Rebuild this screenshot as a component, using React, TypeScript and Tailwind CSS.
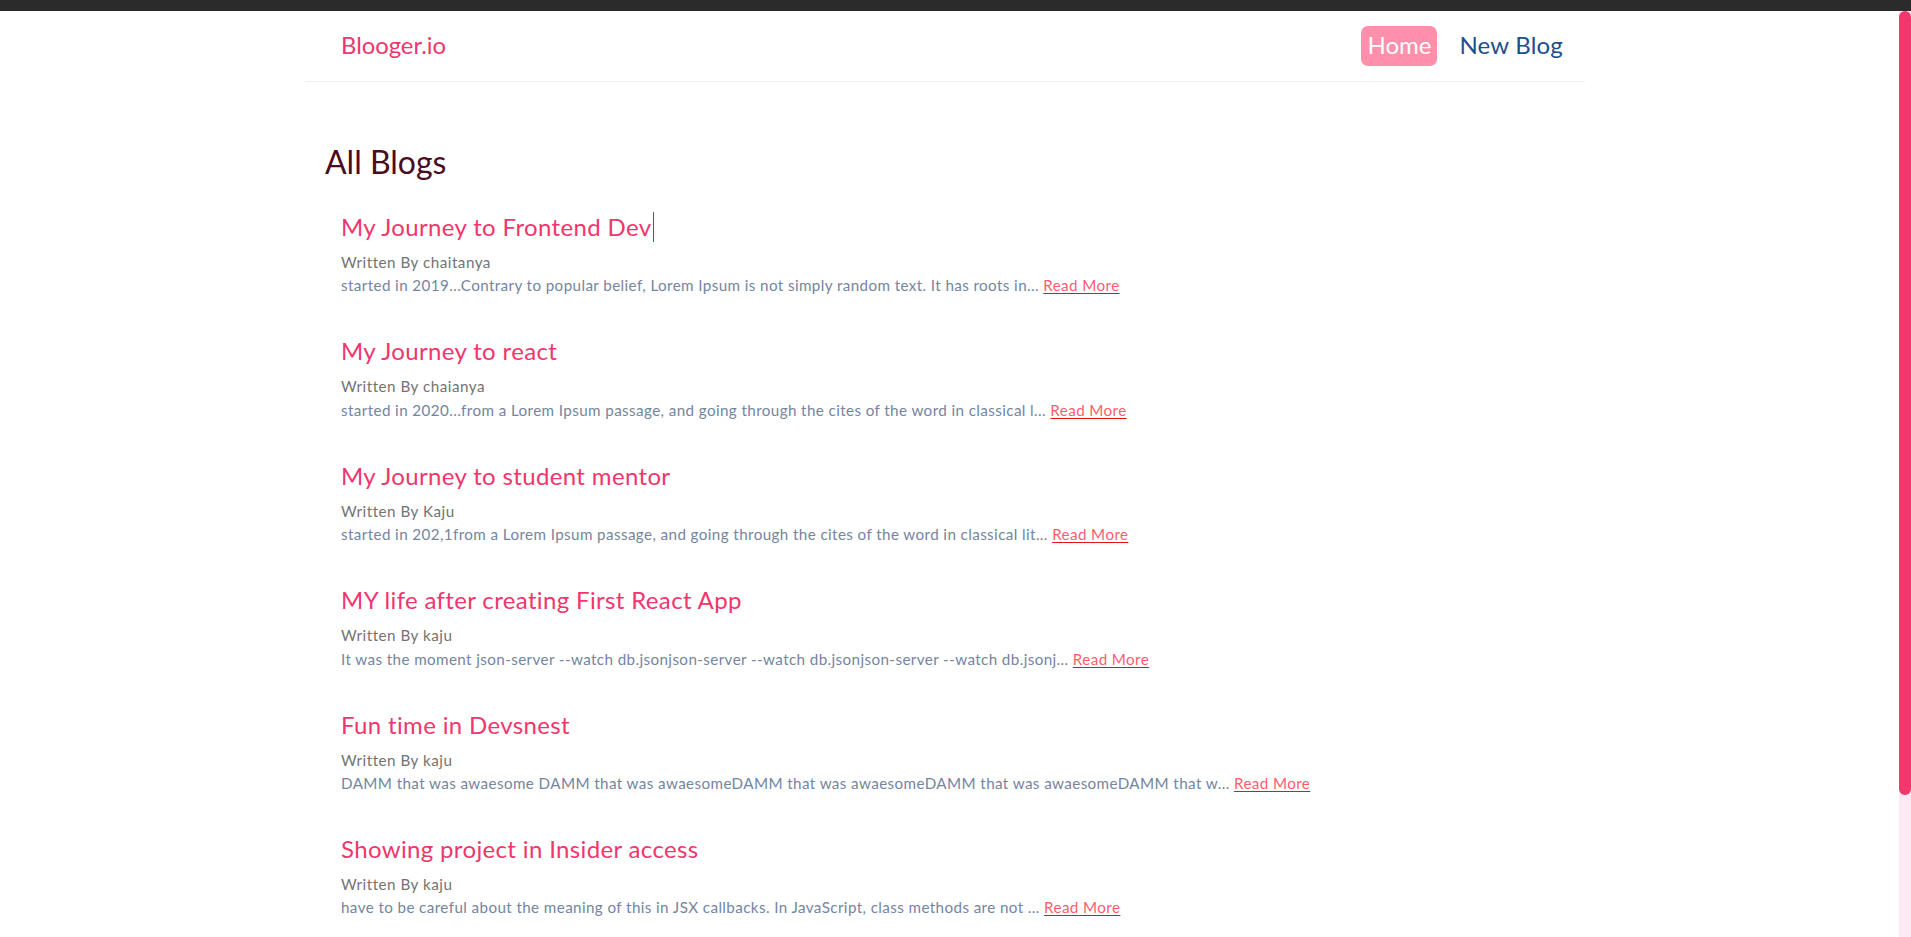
import React from "react";

type Blog = {
	id: number;
	title: string;
	author: string;
	excerpt: string;
};

const blogs: Blog[] = [
	{
		id: 1,
		title: "My Journey to Frontend Dev",
		author: "chaitanya",
		excerpt:
			"started in 2019...Contrary to popular belief, Lorem Ipsum is not simply random text. It has roots in...",
	},
	{
		id: 2,
		title: "My Journey to react",
		author: "chaianya",
		excerpt:
			"started in 2020...from a Lorem Ipsum passage, and going through the cites of the word in classical l...",
	},
	{
		id: 3,
		title: "My Journey to student mentor",
		author: "Kaju",
		excerpt:
			"started in 202,1from a Lorem Ipsum passage, and going through the cites of the word in classical lit...",
	},
	{
		id: 4,
		title: "MY life after creating First React App",
		author: "kaju",
		excerpt:
			"It was the moment json-server --watch db.jsonjson-server --watch db.jsonjson-server --watch db.jsonj...",
	},
	{
		id: 5,
		title: "Fun time in Devsnest",
		author: "kaju",
		excerpt:
			"DAMM that was awaesome DAMM that was awaesomeDAMM that was awaesomeDAMM that was awaesomeDAMM that w...",
	},
	{
		id: 6,
		title: "Showing project in Insider access",
		author: "kaju",
		excerpt:
			"have to be careful about the meaning of this in JSX callbacks. In JavaScript, class methods are not ...",
	},
];

function Navbar() {
	return (
		<nav className="flex h-[71px] items-center justify-between border-b border-[#efefef] pl-[36px] pr-[16px]">
			<h1 className="text-[23.8px] leading-none text-[#f1356d]">Blooger.io</h1>
			<div className="flex items-center gap-4 text-[24px] leading-none">
				<a href="#" className="rounded-[7px] bg-[#ff8fab] px-[6px] pb-[9px] pt-[7px] text-white">
					Home
				</a>
				<a href="#" className="px-[6px] pb-[9px] pt-[7px] tracking-[0.2px] text-[#1b4f8c]">
					New Blog
				</a>
			</div>
		</nav>
	);
}

function BlogPreview({ blog, caret }: { blog: Blog; caret?: boolean }) {
	return (
		<div className="pl-[16px]">
			<h2 className="flex items-center text-[24px] leading-[30px] tracking-[0.35px] text-[#f1356d]">
				{blog.title}
				{caret && <span className="ml-[2px] inline-block h-[30px] w-px bg-[#d81b55]" />}
			</h2>
			<p className="mt-[9px] text-[15.2px] leading-[23.4px] tracking-[0.5px] text-[#737373]">
				Written By {blog.author}
			</p>
			<p className="text-[15.2px] leading-[23.4px] tracking-[0.4px] text-[#7485a0]">
				{blog.excerpt}{" "}
				<a href="#" className="text-[#ff5d6f] underline decoration-[#e01515] underline-offset-2">
					Read More
				</a>
			</p>
		</div>
	);
}

function Scrollbar() {
	return (
		<div className="w-[12px] shrink-0 bg-[#fde9f4]">
			<div className="h-[784px] rounded-full bg-[#f2376d]" />
		</div>
	);
}

export default function App() {
	return (
		<div className="h-[937px] overflow-hidden bg-white font-['Lato',sans-serif]">
			<div className="h-[11px] bg-[#2b2b2b]" />
			<div className="flex h-[926px]">
				<div className="min-w-0 flex-1 overflow-hidden pr-[9px]">
					<div className="mx-auto max-w-[1280px]">
						<Navbar />
						<main className="px-[20px] pb-[61px] pt-[60px]">
							<h2 className="text-[32px] leading-[40px] text-[#4b0c1f]">All Blogs</h2>
							<div className="mt-[30px] flex flex-col gap-[38.6px]">
								{blogs.map((blog, i) => (
									<BlogPreview key={blog.id} blog={blog} caret={i === 0} />
								))}
							</div>
						</main>
					</div>
				</div>
				<Scrollbar />
			</div>
		</div>
	);
}
